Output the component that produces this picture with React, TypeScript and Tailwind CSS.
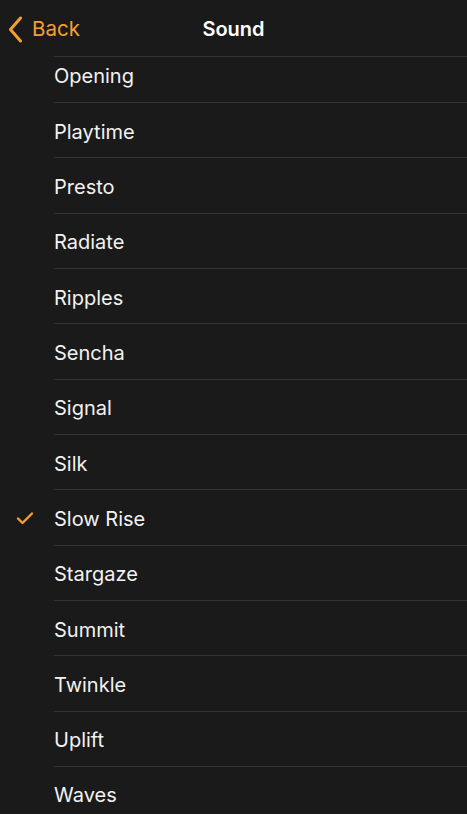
import React from "react";

const SOUNDS = [
  "Opening",
  "Playtime",
  "Presto",
  "Radiate",
  "Ripples",
  "Sencha",
  "Signal",
  "Silk",
  "Slow Rise",
  "Stargaze",
  "Summit",
  "Twinkle",
  "Uplift",
  "Waves",
];

const SELECTED = "Slow Rise";

function Check() {
  return (
    <svg className="w-[18px] h-[14px]" viewBox="0 0 18 14" fill="none" aria-hidden="true">
      <path
        d="M2 7.5l4.5 4.5L16 2.5"
        stroke="#f5a02c"
        strokeWidth={2.4}
        strokeLinecap="round"
        strokeLinejoin="round"
      />
    </svg>
  );
}

export default function App() {
  return (
    <div
      className="w-[467px] h-[814px] bg-[#1a1a1a] text-white overflow-hidden"
      style={{ fontFamily: "Inter, 'Noto Sans', sans-serif" }}
    >
      <header className="relative h-[56px] flex items-center pt-[2px]">
        <button className="flex items-center gap-[9px] pl-[8px] text-[#f5a02c]">
          <svg className="w-[15px] h-[27px]" viewBox="0 0 15 27" fill="none" aria-hidden="true">
            <path
              d="M12.5 2L2.5 13.5l10 11.5"
              stroke="currentColor"
              strokeWidth={3}
              strokeLinecap="round"
              strokeLinejoin="round"
            />
          </svg>
          <span className="text-[20.5px] leading-none">Back</span>
        </button>
        <h1 className="absolute left-0 right-0 text-center text-[20px] font-semibold pointer-events-none">
          Sound
        </h1>
      </header>

      <ul className="border-t border-[#333333] ml-[54px]">
        {SOUNDS.map((name, i) => {
          const first = i === 0;
          const last = i === SOUNDS.length - 1;
          const size = first
            ? "h-[46px] pb-[8px]"
            : last
              ? "h-[48px] pt-[8px]"
              : "h-[55.33px] pt-[3px]";
          return (
            <li
              key={name}
              className={`relative flex items-center ${size} ${
                last ? "" : "border-b border-[#333333]"
              }`}
            >
              {name === SELECTED && (
                <span className="absolute left-[-38px] top-1/2 -translate-y-1/2 flex mt-[1px]">
                  <Check />
                </span>
              )}
              <span className="text-[20px] leading-none text-[#f2f2f2]">{name}</span>
            </li>
          );
        })}
      </ul>
    </div>
  );
}
